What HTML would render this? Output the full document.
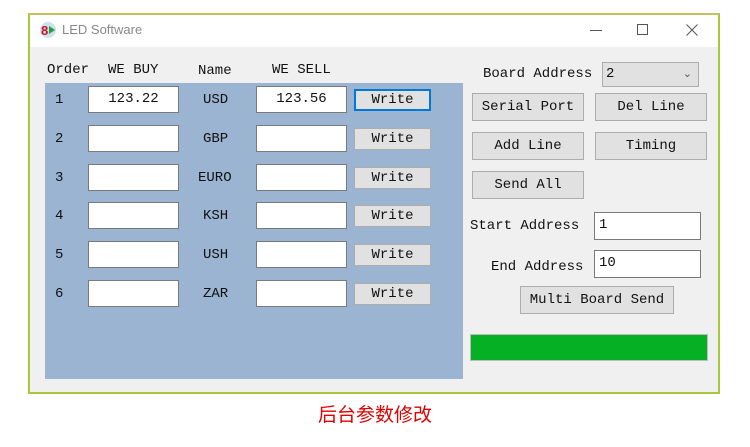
<!DOCTYPE html>
<html><head><meta charset="utf-8"><style>
*{margin:0;padding:0;box-sizing:border-box}
body{width:750px;height:447px;background:#fff;position:relative;overflow:hidden;font-family:"Liberation Mono","Noto Serif CJK SC",monospace;font-size:14px;color:#111}
.a{position:absolute}
.frame{left:28px;top:13px;width:692px;height:381px;border:2px solid #a8c83a;border-top-color:#c8c060;background:#f0f0f0}
.title{left:30px;top:15px;width:688px;height:32px;background:#fff}
.panel{left:45px;top:83px;width:418px;height:296px;background:#9ab4d1}
.inp{background:#fff;border:1px solid #7a7a7a;height:27px;text-align:center;line-height:25px}
.btn{background:#e1e1e1;border:1px solid #adadad;text-align:center}
.wb{width:77px;height:22px;line-height:20px}
.rb{height:28px;line-height:26px}
.lbl{line-height:20px}
</style></head><body>
<div class="a frame"></div>
<div class="a title"></div>
<svg class="a" style="left:39px;top:21px" width="18" height="18"><circle cx="9" cy="9" r="8" fill="#cfe0f0"/><text x="2" y="14" font-size="13" font-weight="bold" fill="#d01020" font-family="Liberation Sans">8</text><polygon points="10,5 16,9 10,13" fill="#20a040"/></svg>
<div class="a" style="left:62px;top:22px;font-family:'Liberation Sans',sans-serif;font-size:13px;color:#888">LED Software</div>
<div class="a" style="left:590px;top:30px;width:12px;height:1px;background:#555"></div>
<div class="a" style="left:637px;top:24px;width:11px;height:11px;border:1px solid #555"></div>
<svg class="a" style="left:686px;top:24px" width="12" height="12"><path d="M0.5 0.5L11.5 11.5M11.5 0.5L0.5 11.5" stroke="#555" stroke-width="1"/></svg>
<div class="a lbl" style="left:47px;top:60px">Order</div>
<div class="a lbl" style="left:108px;top:60px">WE BUY</div>
<div class="a lbl" style="left:198px;top:61px">Name</div>
<div class="a lbl" style="left:272px;top:60px">WE SELL</div>
<div class="a panel"></div>

<div class="a lbl" style="left:55px;top:90px">1</div><div class="a inp" style="left:88px;top:86px;width:91px">123.22</div><div class="a lbl" style="left:203px;top:90px">USD</div><div class="a inp" style="left:256px;top:86px;width:91px">123.56</div><div class="a btn wb" style="left:354px;top:89px;border:2px solid #0078d7;line-height:18px">Write</div>
<div class="a lbl" style="left:55px;top:129px">2</div><div class="a inp" style="left:88px;top:125px;width:91px"></div><div class="a lbl" style="left:203px;top:129px">GBP</div><div class="a inp" style="left:256px;top:125px;width:91px"></div><div class="a btn wb" style="left:354px;top:128px">Write</div>
<div class="a lbl" style="left:55px;top:168px">3</div><div class="a inp" style="left:88px;top:164px;width:91px"></div><div class="a lbl" style="left:198px;top:168px">EURO</div><div class="a inp" style="left:256px;top:164px;width:91px"></div><div class="a btn wb" style="left:354px;top:167px">Write</div>
<div class="a lbl" style="left:55px;top:206px">4</div><div class="a inp" style="left:88px;top:202px;width:91px"></div><div class="a lbl" style="left:203px;top:206px">KSH</div><div class="a inp" style="left:256px;top:202px;width:91px"></div><div class="a btn wb" style="left:354px;top:205px">Write</div>
<div class="a lbl" style="left:55px;top:245px">5</div><div class="a inp" style="left:88px;top:241px;width:91px"></div><div class="a lbl" style="left:203px;top:245px">USH</div><div class="a inp" style="left:256px;top:241px;width:91px"></div><div class="a btn wb" style="left:354px;top:244px">Write</div>
<div class="a lbl" style="left:55px;top:284px">6</div><div class="a inp" style="left:88px;top:280px;width:91px"></div><div class="a lbl" style="left:203px;top:284px">ZAR</div><div class="a inp" style="left:256px;top:280px;width:91px"></div><div class="a btn wb" style="left:354px;top:283px">Write</div>

<div class="a lbl" style="left:483px;top:64px">Board Address</div>
<div class="a btn" style="left:602px;top:62px;width:97px;height:25px;line-height:23px;text-align:left;padding-left:3px">2<span style="position:absolute;right:6px;top:-1px;font-size:11px;color:#555;font-family:'DejaVu Sans'">⌄</span></div>
<div class="a btn rb" style="left:472px;top:93px;width:112px">Serial Port</div>
<div class="a btn rb" style="left:595px;top:93px;width:112px">Del Line</div>
<div class="a btn rb" style="left:472px;top:132px;width:112px">Add Line</div>
<div class="a btn rb" style="left:595px;top:132px;width:112px">Timing</div>
<div class="a btn rb" style="left:472px;top:171px;width:112px">Send All</div>
<div class="a lbl" style="left:470px;top:216px">Start Address</div>
<div class="a inp" style="left:594px;top:212px;width:107px;height:28px;text-align:left;padding-left:4px">1</div>
<div class="a lbl" style="left:491px;top:257px">End Address</div>
<div class="a inp" style="left:594px;top:250px;width:107px;height:28px;text-align:left;padding-left:4px">10</div>
<div class="a btn rb" style="left:520px;top:286px;width:154px">Multi Board Send</div>
<div class="a" style="left:470px;top:334px;width:238px;height:27px;background:#06b025;border:1px solid #bcbcbc"></div>
<div class="a" style="left:0;width:750px;top:400px;text-align:center;font-family:'Noto Sans CJK SC',sans-serif;font-size:19px;color:#e00000">后台参数修改</div>
</body></html>
